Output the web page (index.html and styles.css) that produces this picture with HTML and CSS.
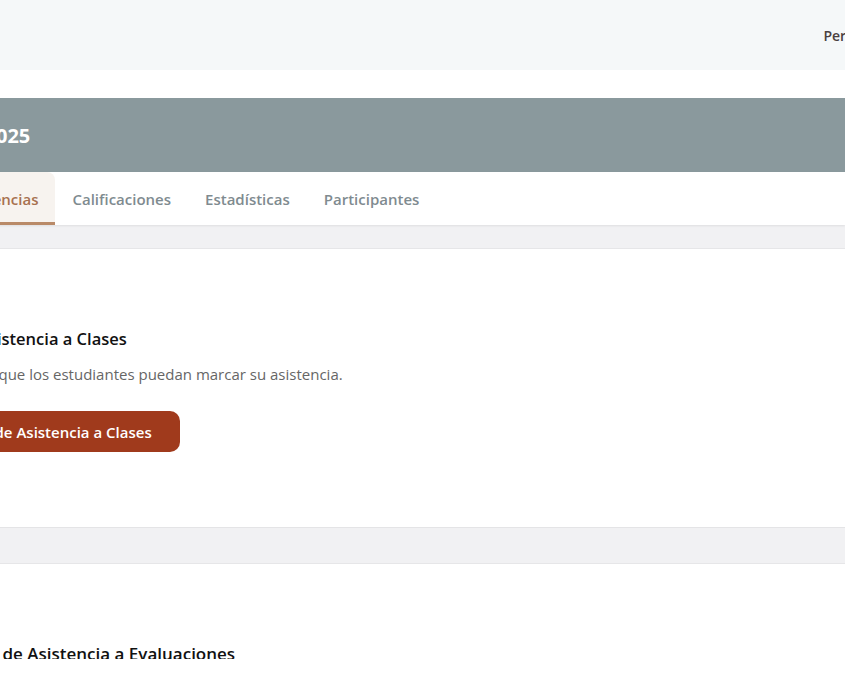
FILE: index.html
```html
<!DOCTYPE html>
<html lang="es">
<head>
  <meta charset="UTF-8">
  <meta name="viewport" content="width=device-width, initial-scale=1.0">
  <title>Asistencias</title>
  <link rel="stylesheet" href="styles.css">
</head>
<body>
  <div class="page">
    <header class="topbar">
      <nav class="topbar-nav">
        <a href="#">Perfil</a>
      </nav>
    </header>

    <div class="course-band">
      <h1 class="course-title">Seminario 2025</h1>
    </div>

    <nav class="tabs">
      <a class="tab active" href="#">Asistencias</a>
      <a class="tab" href="#">Calificaciones</a>
      <a class="tab" href="#">Estadísticas</a>
      <a class="tab" href="#">Participantes</a>
    </nav>

    <div class="gap gap-first"></div>

    <section class="card">
      <h2 class="card-title card-title-first">Asistencia a Clases</h2>
      <p class="card-text">Active para que los estudiantes puedan marcar su asistencia.</p>
      <button class="btn-primary">Iniciar Toma de Asistencia a Clases</button>
    </section>

    <div class="gap"></div>

    <section class="card">
      <h2 class="card-title card-title-second">Toma de Asistencia a Evaluaciones</h2>
    </section>
  </div>
</body>
</html>
```

FILE: styles.css
```css
:root {
  --band-color: #8a999d;
  --topbar-bg: #f5f8f9;
  --tab-text: #7f8b90;
  --tab-active-text: #a7714f;
  --tab-active-bg: #f7f3ef;
  --tab-active-line: #b98a68;
  --gap-bg: #f1f1f3;
  --btn-color: #a03a1c;
}

* {
  margin: 0;
  padding: 0;
  box-sizing: border-box;
}

html, body {
  width: 100%;
  height: 100%;
  overflow: hidden;
  background: #fff;
  font-family: "Open Sans", "Noto Sans", Arial, sans-serif;
}

a {
  text-decoration: none;
  color: inherit;
}

.page {
  height: 659px;
  overflow: hidden;
}

.topbar {
  height: 70px;
  background: var(--topbar-bg);
  display: flex;
  align-items: center;
  justify-content: flex-end;
}

.topbar-nav {
  margin-right: -14px;
  font-size: 14px;
  font-weight: 600;
  color: #4a4040;
}

.course-band {
  margin-top: 28px;
  height: 74px;
  background: var(--band-color);
  display: flex;
  align-items: center;
}

.course-title {
  margin-left: -122px;
  font-size: 20px;
  font-weight: 700;
  color: #fff;
  white-space: nowrap;
}

.tabs {
  height: 53px;
  display: flex;
  margin-left: -59px;
  background: #fff;
  box-shadow: 0 1px 2px rgba(0, 0, 0, 0.08);
  position: relative;
}

.tab {
  display: flex;
  align-items: center;
  padding: 3px 17px 0;
  font-size: 15px;
  font-weight: 600;
  color: var(--tab-text);
  border-bottom: 3px solid transparent;
}

.tab.active {
  color: var(--tab-active-text);
  background: var(--tab-active-bg);
  border-bottom-color: var(--tab-active-line);
  border-radius: 8px 8px 0 0;
}

.gap {
  height: 37px;
  background: var(--gap-bg);
  border-top: 1px solid #e4e4e6;
  border-bottom: 1px solid #e6e6e8;
}

.gap-first {
  height: 24px;
  border-top: none;
}

.card {
  background: #fff;
  padding: 78px 0 75px;
}

.card-title {
  font-size: 16.5px;
  font-weight: 600;
  line-height: 24px;
  color: #111;
  white-space: nowrap;
}

.card-title-first {
  margin-left: -22px;
}

.card-title-second {
  margin-left: -48px;
  font-size: 17px;
}

.card-text {
  margin-top: 12px;
  margin-left: -83px;
  font-size: 15px;
  line-height: 22px;
  color: #666;
  white-space: nowrap;
}

.btn-primary {
  margin-top: 26px;
  margin-left: -127px;
  height: 41px;
  padding: 0 28px;
  border: none;
  border-radius: 10px;
  background: var(--btn-color);
  color: #fff;
  font-family: inherit;
  font-size: 15px;
  font-weight: 600;
  white-space: nowrap;
}
```
